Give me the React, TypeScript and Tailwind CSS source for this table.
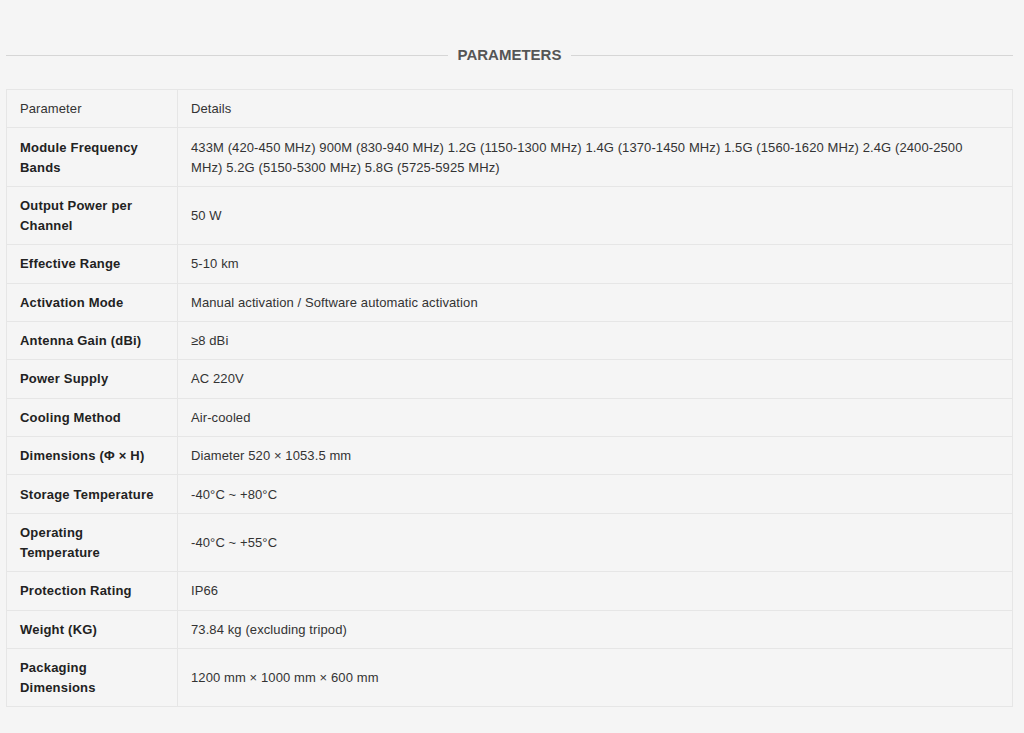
import React from "react";

const rows: [string, string][] = [
  [
    "Module Frequency Bands",
    "433M (420-450 MHz) 900M (830-940 MHz) 1.2G (1150-1300 MHz) 1.4G (1370-1450 MHz) 1.5G (1560-1620 MHz) 2.4G (2400-2500 MHz) 5.2G (5150-5300 MHz) 5.8G (5725-5925 MHz)",
  ],
  ["Output Power per Channel", "50 W"],
  ["Effective Range", "5-10 km"],
  ["Activation Mode", "Manual activation / Software automatic activation"],
  ["Antenna Gain (dBi)", "≥8 dBi"],
  ["Power Supply", "AC 220V"],
  ["Cooling Method", "Air-cooled"],
  ["Dimensions (Φ × H)", "Diameter 520 × 1053.5 mm"],
  ["Storage Temperature", "-40°C ~ +80°C"],
  ["Operating Temperature", "-40°C ~ +55°C"],
  ["Protection Rating", "IP66"],
  ["Weight (KG)", "73.84 kg (excluding tripod)"],
  ["Packaging Dimensions", "1200 mm × 1000 mm × 600 mm"],
];

const App = () => {
  return (
    <div
      className="min-h-screen bg-[#f5f5f5] pt-[45px] pb-[26px] pl-[6px] pr-[11px]"
      style={{ fontFamily: "'Liberation Sans', Arial, sans-serif" }}
    >
      {/* Section title */}
      <div className="flex items-center gap-[10px]">
        <div className="flex-1 h-px bg-[#d6d6d6]" />
        <h2 className="text-[15px] leading-[20px] font-bold text-[#555]">
          PARAMETERS
        </h2>
        <div className="flex-1 h-px bg-[#d6d6d6]" />
      </div>

      {/* Table */}
      <table className="mt-[24px] w-[1007px] border-collapse text-[13px] leading-[20px] text-[#333] tracking-[0.1px]">
        <tbody>
          <tr>
            <td className="w-[171px] border border-[#e6e6e6] pl-[13px] pr-[12px] pt-[9.2px] pb-[8.2px]">
              Parameter
            </td>
            <td className="border border-[#e6e6e6] px-[13px] pt-[9.2px] pb-[8.2px]">
              Details
            </td>
          </tr>
          {rows.map(([label, value]) => (
            <tr key={label}>
              <td className="w-[171px] border border-[#e6e6e6] pl-[13px] pr-[12px] pt-[9.2px] pb-[8.2px] font-bold text-[#222] tracking-[0.2px]">
                {label}
              </td>
              <td className="border border-[#e6e6e6] px-[13px] pt-[9.2px] pb-[8.2px] pr-[30px]">
                {value}
              </td>
            </tr>
          ))}
        </tbody>
      </table>
    </div>
  );
};

export default App;
